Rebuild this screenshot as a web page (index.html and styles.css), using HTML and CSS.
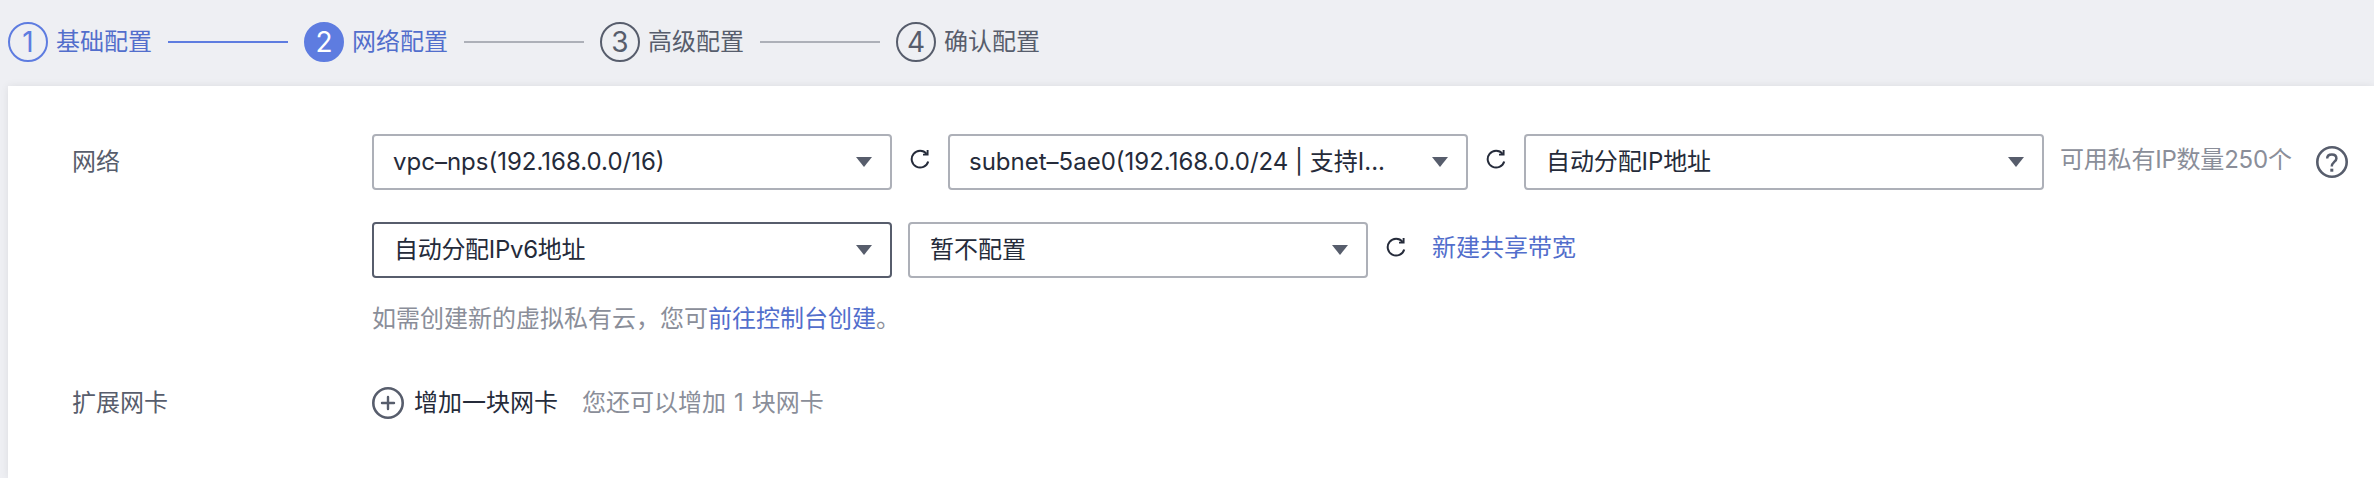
FILE: index.html
```html
<!DOCTYPE html>
<html lang="zh-CN">
<head>
<meta charset="utf-8">
<title>网络配置</title>
<link rel="stylesheet" href="styles.css">
</head>
<body>
<svg class="defs" aria-hidden="true">
  <symbol id="refresh" viewBox="0 0 20 20">
    <path d="M18.2 12.4A8.4 8.4 0 1 1 16.6 4.8" fill="none" stroke="currentColor" stroke-width="2"/>
    <path d="M17.6 1V5.6H13" fill="none" stroke="currentColor" stroke-width="1.9"/>
  </symbol>
</svg>
<nav class="steps">
  <div class="step done"><span class="num">1</span><span class="name">基础配置</span></div>
  <span class="line done"></span>
  <div class="step current"><span class="num">2</span><span class="name">网络配置</span></div>
  <span class="line"></span>
  <div class="step"><span class="num">3</span><span class="name">高级配置</span></div>
  <span class="line"></span>
  <div class="step"><span class="num">4</span><span class="name">确认配置</span></div>
</nav>
<main class="panel">
  <section class="row">
    <div class="label">网络</div>
    <div class="content">
      <div class="controls">
        <div class="select"><span class="value latin">vpc–nps(192.168.0.0/16)</span><i class="caret"></i></div>
        <svg class="refresh"><use href="#refresh"/></svg>
        <div class="select"><span class="value subnet">subnet–5ae0(192.168.0.0/24 | 支持I...</span><i class="caret"></i></div>
        <svg class="refresh"><use href="#refresh"/></svg>
        <div class="select"><span class="value ip">自动分配IP地址</span><i class="caret"></i></div>
        <span class="count">可用私有IP数量250个</span>
        <svg class="help" viewBox="0 0 32 32">
          <circle cx="16" cy="16" r="14.7" fill="none" stroke="currentColor" stroke-width="2.6"/>
          <path d="M11.2 12.6C11.2 10 13 8.5 15.8 8.5S20.4 10 20.4 12.4C20.4 15.6 15.8 15.8 15.8 20.6" fill="none" stroke="currentColor" stroke-width="2.5"/>
          <rect x="14.3" y="22.7" width="3" height="3" fill="currentColor"/>
        </svg>
      </div>
      <div class="controls second">
        <div class="select active"><span class="value ipv6">自动分配IPv6地址</span><i class="caret"></i></div>
        <div class="select narrow"><span class="value">暂不配置</span><i class="caret"></i></div>
        <svg class="refresh"><use href="#refresh"/></svg>
        <a class="link bandwidth">新建共享带宽</a>
      </div>
      <p class="hint">如需创建新的虚拟私有云，您可<a class="link">前往控制台创建</a>。</p>
    </div>
  </section>
  <section class="row nic">
    <div class="label">扩展网卡</div>
    <div class="content add">
      <svg class="plus" viewBox="0 0 32 32">
        <circle cx="16" cy="16" r="14.7" fill="none" stroke="currentColor" stroke-width="2.6"/>
        <path d="M10 16H22M16 10V22" fill="none" stroke="currentColor" stroke-width="2.4" stroke-linecap="round"/>
      </svg>
      <span class="add-text">增加一块网卡</span>
      <span class="remain">您还可以增加 1 块网卡</span>
    </div>
  </section>
</main>
</body>
</html>
```
FILE: styles.css
```css
* { box-sizing: border-box; }
body {
  margin: 0;
  height: 478px;
  overflow: hidden;
  background: #eeeff3;
  color: #252b3a;
  font: 24px/36px Inter, "Noto Sans CJK SC", sans-serif;
  display: flex;
  flex-direction: column;
  white-space: nowrap;
}
.defs { position: absolute; width: 0; height: 0; }
.steps {
  display: flex;
  align-items: center;
  height: 86px;
  padding: 0 0 2px 8px;
  flex: none;
}
.step { display: flex; align-items: center; gap: 8px; width: 144px; color: #575d6c; }
.num {
  width: 40px;
  height: 40px;
  border: 2px solid #575d6c;
  border-radius: 50%;
  font-size: 28px;
  line-height: 36px;
  text-align: center;
}
.line { width: 120px; height: 2px; margin: 0 16px; background: #adb0b8; }
.line.done { background: #5e7ce0; }
.step.done, .step.current { color: #526ecc; }
.step.done .num { border-color: #5e7ce0; color: #5e7ce0; }
.step.current .num { border-color: #5e7ce0; background: #5e7ce0; color: #fff; }
.panel {
  flex: 1;
  margin-left: 8px;
  padding: 48px 0 0 64px;
  background: #fff;
  box-shadow: 0 0 8px rgba(0, 0, 0, .08);
}
.row { display: flex; }
.label { width: 300px; padding-top: 10px; color: #575d6c; }
.controls { display: flex; align-items: center; height: 56px; }
.second { margin-top: 32px; }
.select {
  display: flex;
  align-items: center;
  justify-content: space-between;
  width: 520px;
  height: 56px;
  padding: 0 18px 0 20px;
  border: 2px solid #adb0b8;
  border-radius: 4px;
}
.latin { margin-left: -1px; }
.subnet { margin-left: -1px; }
.ip { letter-spacing: -.1px; }
.ipv6 { letter-spacing: -.3px; }
.select.active { border-color: #575d6c; margin-right: 16px; }
.select.narrow { width: 460px; }
.caret { border: 8px solid transparent; border-top: 10px solid #575d6c; border-bottom: 0; }
.refresh { width: 20px; height: 20px; margin: 0 18px 6px; }
.count { width: 256px; margin: 0 0 4px 16px; color: #8a8e99; letter-spacing: -.2px; }
.help, .plus { width: 32px; height: 32px; color: #575d6c; }
.link { color: #526ecc; }
.bandwidth { margin: 0 0 4px 8px; }
.hint { margin: 23px 0 0; color: #8a8e99; }
.nic { margin-top: 48px; }
.nic .label { padding: 0; }
.add { display: flex; align-items: center; }
.add-text { margin: 0 24px 0 10px; }
.remain { color: #8a8e99; word-spacing: 1.3px; }
```
